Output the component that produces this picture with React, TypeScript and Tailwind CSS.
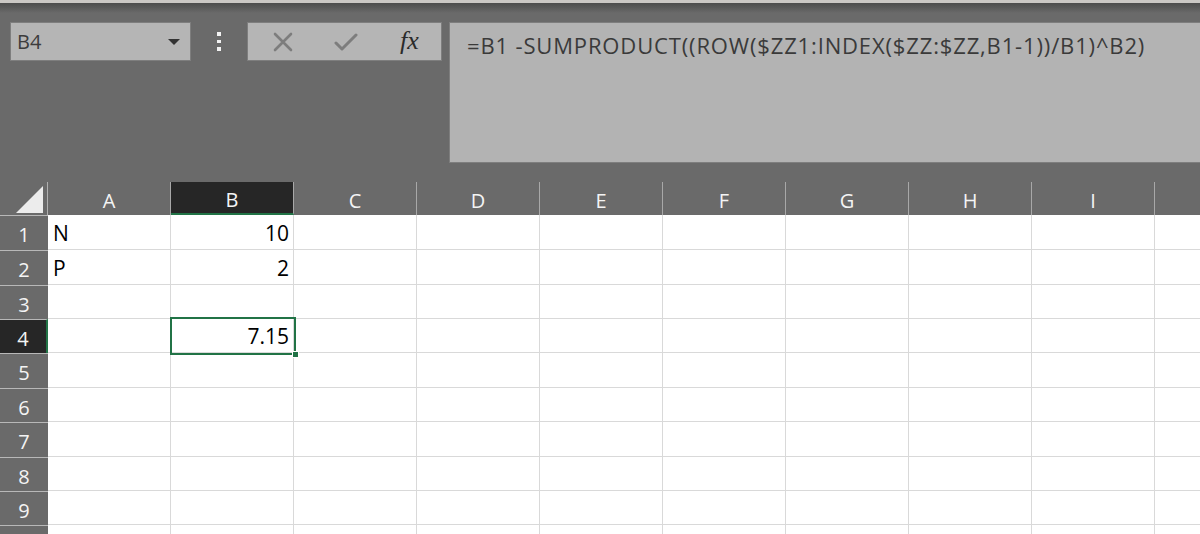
const cols = ["A", "B", "C", "D", "E", "F", "G", "H", "I"];
const rowHeights = ["h-[35px]", "h-[35px]", "h-[34px]", "h-[34px]", "h-[35px]", "h-[34px]", "h-[35px]", "h-[34px]", "h-[34px]", "h-[35px]"];

const cells: Record<string, { text: string; right?: boolean }> = {
  A1: { text: "N" },
  B1: { text: "10", right: true },
  A2: { text: "P" },
  B2: { text: "2", right: true },
  B4: { text: "7.15", right: true },
};

const XIcon = () => (
  <svg width="20" height="20" viewBox="0 0 20 20">
    <path d="M2 2 L18 18 M18 2 L2 18" stroke="#7d7d7d" strokeWidth="2.6" strokeLinecap="round" />
  </svg>
);

const CheckIcon = () => (
  <svg width="24" height="20" viewBox="0 0 24 20">
    <path d="M2 11 L8 17 L22 3" stroke="#7d7d7d" strokeWidth="3" fill="none" strokeLinecap="round" strokeLinejoin="round" />
  </svg>
);

const App = () => {
  return (
    <div className="w-[1200px] h-[534px] overflow-hidden bg-[#6a6a6a] font-['Open_Sans',sans-serif]">
      <div className="h-[3px] bg-[#cbc8c5]" />
      <div className="h-[10px] bg-gradient-to-b from-[#4c4c4c] to-[#6a6a6a]" />

      {/* toolbar */}
      <div className="flex items-start pl-[10px] mt-[9px]">
        <div className="w-[181px] h-[39px] bg-[#b5b5b5] border border-[#7e7e7e] flex items-center justify-between pl-[6px] pr-[10px]">
          <span className="text-[20px] text-[#3c3c3c] leading-none">B4</span>
          <svg width="12" height="6" viewBox="0 0 12 6">
            <path d="M0 0 L12 0 L6 6 Z" fill="#333" />
          </svg>
        </div>
        <div className="w-[56px] h-[39px] flex flex-col items-center justify-center gap-[4px]">
          <div className="w-[3.5px] h-[3.5px] bg-[#f2f2f2]" />
          <div className="w-[3.5px] h-[3.5px] bg-[#f2f2f2]" />
          <div className="w-[3.5px] h-[3.5px] bg-[#f2f2f2]" />
        </div>
        <div className="w-[195px] h-[39px] bg-[#b5b5b5] border border-[#7e7e7e] flex items-center">
          <div className="w-[66px] flex justify-center pl-[4px]">
            <XIcon />
          </div>
          <div className="w-[64px] flex justify-center">
            <CheckIcon />
          </div>
          <div className="flex-1 flex justify-center pb-[2px]">
            <span className="font-['Liberation_Serif',serif] italic text-[26px] text-[#2b2b2b] leading-none">fx</span>
          </div>
        </div>
        <div className="ml-[7px] flex-1 h-[141px] bg-[#b3b3b3] border-l border-t border-b border-[#7e7e7e] pl-[17px] pt-[6px]">
          <span className="text-[22px] text-[#3a3a3a] tracking-[0.85px] whitespace-nowrap">
            =B1 -SUMPRODUCT((ROW($ZZ1:INDEX($ZZ:$ZZ,B1-1))/B1)^B2)
          </span>
        </div>
      </div>

      {/* grid */}
      <div className="relative mt-[19px]">
        <div className="flex h-[33px]">
          <div className="w-[48px] shrink-0 border-r border-[#b0b0b0] flex items-end justify-end pr-[3px] pb-[2px]">
            <svg width="28" height="27" viewBox="0 0 28 27">
              <path d="M27 0 L27 27 L0 27 Z" fill="#ececec" />
            </svg>
          </div>
          {cols.map((c) => (
            <div
              key={c}
              className={
                c === "B"
                  ? "w-[123px] shrink-0 bg-[#262626] border-b-2 border-b-[#217346] border-r border-r-[#a8a8a8] flex items-center justify-center pt-[4px]"
                  : "w-[123px] shrink-0 border-r border-[#a8a8a8] flex items-center justify-center pt-[4px]"
              }
            >
              <span className="text-[20px] text-[#f4f4f4] leading-none">{c}</span>
            </div>
          ))}
          <div className="flex-1" />
        </div>

        {rowHeights.map((h, i) => {
          const r = i + 1;
          const active = r === 4;
          return (
            <div key={r} className={`flex ${h}`}>
              <div
                className={
                  active
                    ? "w-[48px] shrink-0 bg-[#262626] border-r-2 border-r-[#217346] border-t border-t-[#b8b8b8] flex items-center justify-center pt-[4px]"
                    : "w-[48px] shrink-0 border-t border-[#b8b8b8] flex items-center justify-center pt-[4px]"
                }
              >
                {r < 10 && <span className="text-[20px] text-[#f4f4f4] leading-none">{r}</span>}
              </div>
              {cols.map((c) => {
                const cell = cells[`${c}${r}`];
                return (
                  <div
                    key={c}
                    className={`w-[123px] shrink-0 bg-white border-r border-b border-[#d9d9d9] flex items-end pb-[1px] ${
                      cell?.right ? "justify-end pr-[4px]" : "justify-start pl-[5px]"
                    }`}
                  >
                    {cell && <span className="text-[21px] text-black leading-[29px]">{cell.text}</span>}
                  </div>
                );
              })}
              <div className="flex-1 bg-white border-b border-[#d9d9d9]" />
            </div>
          );
        })}

        {/* selection */}
        <div className="absolute left-[170px] top-[135px] w-[126px] h-[38px] border-2 border-[#217346]">
          <div className="absolute right-[-5px] bottom-[-5px] w-[7px] h-[7px] bg-[#217346] border border-white" />
        </div>
      </div>
    </div>
  );
};

export default App;
